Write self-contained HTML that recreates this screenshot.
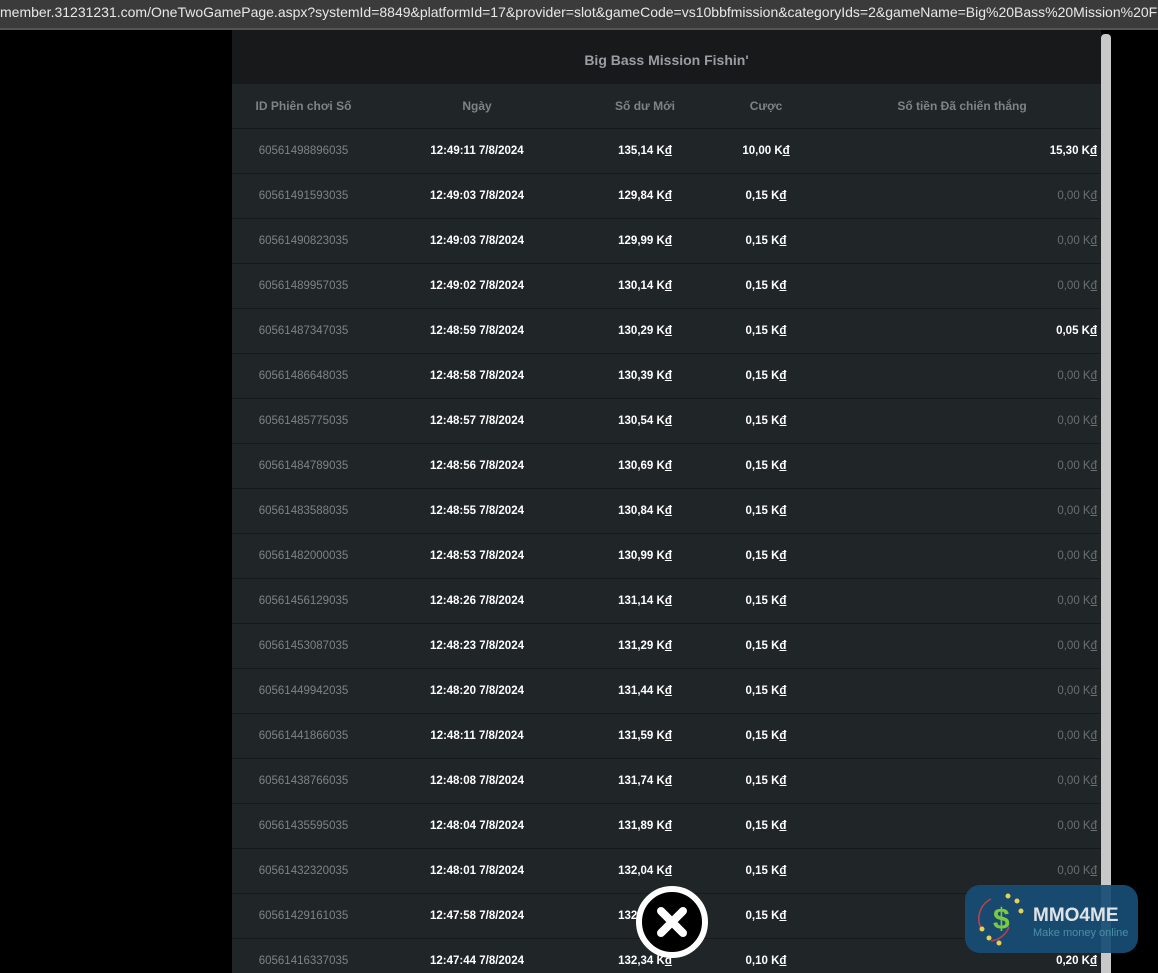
<!DOCTYPE html>
<html><head><meta charset="utf-8"><style>
*{margin:0;padding:0;box-sizing:border-box}
html,body{width:1158px;height:973px;overflow:hidden}
body{background:#000;position:relative;font-family:"Liberation Sans",sans-serif}
.bar{position:absolute;left:0;top:0;width:1158px;height:28px;background:#3b3b3b;color:#e8e8e8;font-size:14px;line-height:24px;white-space:nowrap;overflow:hidden}
.bar2{position:absolute;left:0;top:28px;width:1158px;height:2px;background:#555}
.panel{position:absolute;left:232px;top:30px;width:869px;height:943px;background:#202528;overflow:hidden}
.title{height:54px;background:#18191b;color:#9a9ea2;font-weight:bold;font-size:14px;text-align:center;line-height:60px}
.row{position:relative;height:45px;border-bottom:1px solid #17191b;font-size:11.5px}
.row span{position:absolute;top:0;line-height:44px;white-space:nowrap}
.hd span{color:#7e8387;font-weight:bold;font-size:12px}
.c1{left:0;width:143px;text-align:center;color:#7e8387}
.c2{left:165px;width:160px;text-align:center;color:#fff;font-weight:bold}
.c3{left:353px;width:120px;text-align:center;color:#fff;font-weight:bold}
.c4{left:484px;width:100px;text-align:center;color:#fff;font-weight:bold}
.c5{right:4px;text-align:right;color:#fff;font-weight:bold}
.c5.z{color:#6a6f73;font-weight:normal}
u{text-decoration:underline}
.sb{position:absolute;left:1101px;top:34px;width:10px;height:939px;background:#c8c8c8;border-radius:4px 4px 0 0}
.x{position:absolute;left:636px;top:886px;width:72px;height:72px;border-radius:50%;background:#000;border:6px solid #fff}
.badge{position:absolute;left:965px;top:885px;width:173px;height:68px;border-radius:15px;background:rgba(24,78,118,0.93)}
</style></head><body>
<div class="bar">member.31231231.com/OneTwoGamePage.aspx?systemId=8849&amp;platformId=17&amp;provider=slot&amp;gameCode=vs10bbfmission&amp;categoryIds=2&amp;gameName=Big%20Bass%20Mission%20Fis</div>
<div class="bar2"></div>
<div class="panel">
<div class="title">Big Bass Mission Fishin'</div>
<div class="row hd" style="height:45px"><span class="c1" style="left:0;width:143px">ID Phiên chơi Số</span><span style="left:165px;width:160px;text-align:center">Ngày</span><span style="left:353px;width:120px;text-align:center">Số dư Mới</span><span style="left:484px;width:100px;text-align:center">Cược</span><span style="left:630px;width:200px;text-align:center">Số tiền Đã chiến thắng</span></div>
<div id="rows"></div>
</div>
<div class="sb"></div>
<div class="x"><svg width="60" height="60" viewBox="0 0 60 60" style="position:absolute;left:0;top:0"><path d="M19 19L41 41M41 19L19 41" stroke="#fff" stroke-width="8" stroke-linecap="round"/></svg></div>
<div class="badge">
<svg width="60" height="68" viewBox="0 0 60 68" style="position:absolute;left:4px;top:0">
<path d="M22 14 A22 22 0 0 0 13 45" stroke="#c0404a" stroke-width="1.5" fill="none"/>
<path d="M40 42 A22 22 0 0 1 22 56" stroke="#c0404a" stroke-width="1.5" fill="none"/>
<text x="24" y="44" font-family="Liberation Sans" font-weight="bold" font-size="30" fill="#7cc840">$</text>
<g fill="#e8d050"><circle cx="39" cy="11" r="2.5"/><circle cx="48" cy="16" r="2.5"/><circle cx="52" cy="26" r="2.5"/><circle cx="13" cy="44" r="2.5"/><circle cx="20" cy="53" r="2.5"/><circle cx="30" cy="58" r="2.5"/></g>
</svg>
<div style="position:absolute;left:68px;top:20px;color:#dfe3e6;font-weight:bold;font-size:19px">MMO4ME</div>
<div style="position:absolute;left:68px;top:42px;color:#4a8fa6;font-size:11px">Make money online</div>
</div>
<script>
var d=[["60561498896035","12:49:11 7/8/2024","135,14","10,00","15,30"],["60561491593035","12:49:03 7/8/2024","129,84","0,15",""],["60561490823035","12:49:03 7/8/2024","129,99","0,15",""],["60561489957035","12:49:02 7/8/2024","130,14","0,15",""],["60561487347035","12:48:59 7/8/2024","130,29","0,15","0,05"],["60561486648035","12:48:58 7/8/2024","130,39","0,15",""],["60561485775035","12:48:57 7/8/2024","130,54","0,15",""],["60561484789035","12:48:56 7/8/2024","130,69","0,15",""],["60561483588035","12:48:55 7/8/2024","130,84","0,15",""],["60561482000035","12:48:53 7/8/2024","130,99","0,15",""],["60561456129035","12:48:26 7/8/2024","131,14","0,15",""],["60561453087035","12:48:23 7/8/2024","131,29","0,15",""],["60561449942035","12:48:20 7/8/2024","131,44","0,15",""],["60561441866035","12:48:11 7/8/2024","131,59","0,15",""],["60561438766035","12:48:08 7/8/2024","131,74","0,15",""],["60561435595035","12:48:04 7/8/2024","131,89","0,15",""],["60561432320035","12:48:01 7/8/2024","132,04","0,15",""],["60561429161035","12:47:58 7/8/2024","132,19","0,15",""],["60561416337035","12:47:44 7/8/2024","132,34","0,10","0,20"]];
var h="";d.forEach(function(r){var z=r[4]==="";h+='<div class="row"><span class="c1">'+r[0]+'</span><span class="c2">'+r[1]+'</span><span class="c3">'+r[2]+' K<u>đ</u></span><span class="c4">'+r[3]+' K<u>đ</u></span><span class="c5'+(z?' z':'')+'">'+(z?'0,00':r[4])+' K<u>đ</u></span></div>';});
document.getElementById("rows").innerHTML=h;
</script>
</body></html>
